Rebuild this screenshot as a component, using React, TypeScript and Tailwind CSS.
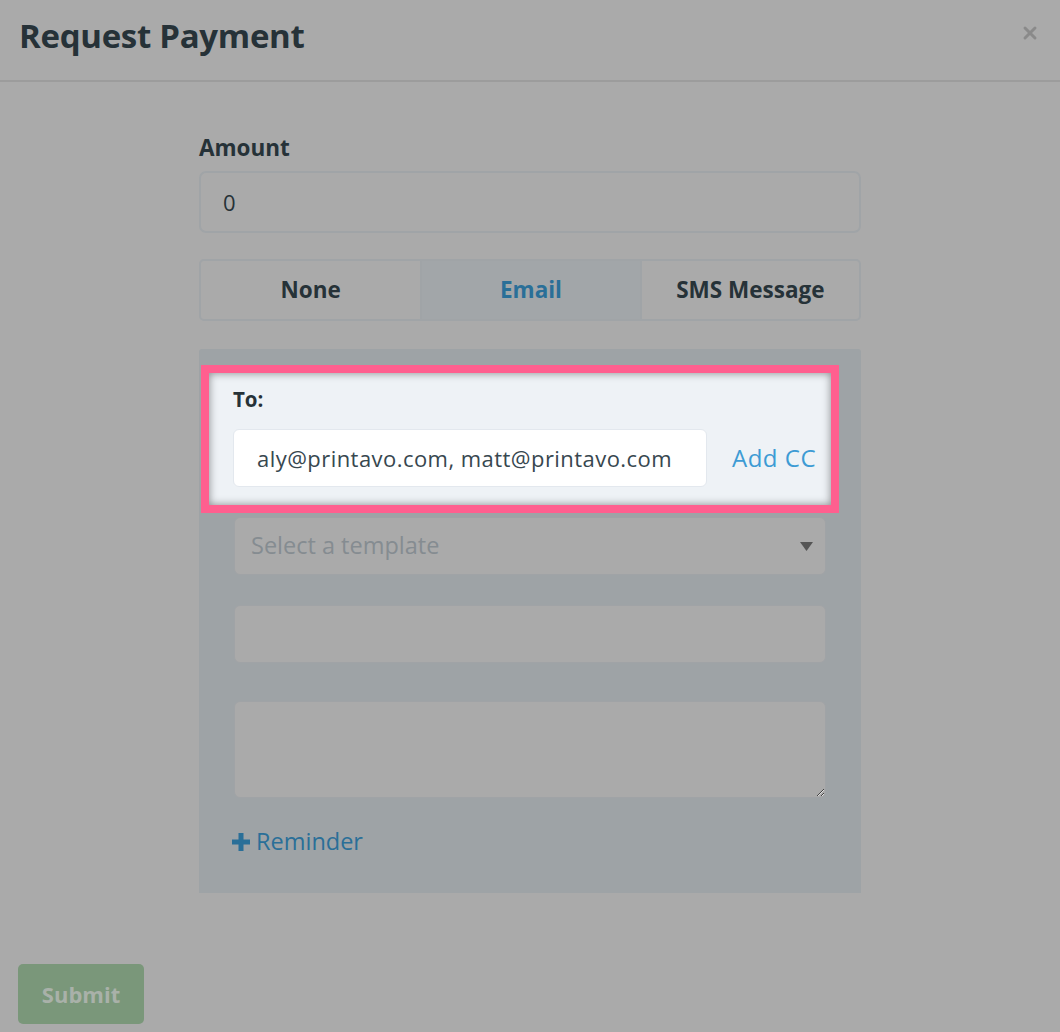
import { X } from 'lucide-react';

const METHODS = ['None', 'Email', 'SMS Message'];

export default function App() {
    const selected = 'Email';

    return (
        <div className="w-full min-h-[1032px] bg-[#aaaaaa] flex flex-col font-['Open_Sans',sans-serif] text-[#263238]">
            {/* Header */}
            <div className="h-[82px] border-b-2 border-[#9c9c9c] pl-[19px] pr-[20px] flex items-center justify-between">
                <h1 className="text-[33px] font-bold tracking-[-0.3px] -mt-[8px]">Request Payment</h1>
                <X className="w-[20px] h-[20px] text-[#8a8a8a] -mt-[14px]" strokeWidth={3.5} />
            </div>

            {/* Body */}
            <div className="w-[662px] mx-auto pt-[51px] flex flex-col">
                <label className="text-[22.5px] font-bold leading-[30px]">Amount</label>
                <div className="mt-[8px] h-[62px] rounded-[7px] border-2 border-[#a0a4a7] flex items-center px-[22px] text-[22px]">
                    0
                </div>

                {/* Delivery method */}
                <div className="mt-[26px] h-[62px] rounded-[5px] border-2 border-[#a0a4a7] grid grid-cols-3 overflow-hidden">
                    {METHODS.map((m, i) => (
                        <div
                            key={m}
                            className={
                                'flex items-center justify-center text-[22.5px] font-bold ' +
                                (i > 0 ? 'border-l-2 border-[#a0a4a7] ' : '') +
                                (m === selected ? 'bg-[#a2a6a9] text-[#2a6f98]' : 'text-[#263238]')
                            }
                        >
                            {m}
                        </div>
                    ))}
                </div>

                {/* Email panel */}
                <div className="mt-[28px] bg-[#9ea3a6] rounded-t-[3px] pt-[16px] pb-[34px] flex flex-col">
                    <div className="ml-[2px] w-[638px] border-[8px] border-[#ff5f8f] bg-[#eef2f6] shadow-[inset_0_0_8px_rgba(0,0,0,0.45)] pl-[24px] pr-[10px] pt-[12px] pb-[18px]">
                        <div className="text-[20.5px] font-bold leading-[28px]">To:</div>
                        <div className="mt-[16px] flex items-center">
                            <div className="w-[474px] h-[58px] bg-white rounded-[6px] border border-[#e3e8ee] flex items-center pl-[23px] text-[22px] tracking-[0.45px] text-[#37474f]">
                                aly@printavo.com, matt@printavo.com
                            </div>
                            <span className="ml-[25px] text-[24px] tracking-[0.5px] text-[#3d9bd4]">Add CC</span>
                        </div>
                    </div>

                    <div className="px-[35px] flex flex-col">
                        <div className="mt-[4px] h-[58px] rounded-[6px] border border-[#a0a3a6] bg-[#aaaaaa] flex items-center justify-between pl-[16px] pr-[12px]">
                            <span className="text-[23.5px] text-[#858c91]">Select a template</span>
                            <svg width="13" height="9" viewBox="0 0 13 9">
                                <path d="M0 0 H13 L6.5 9 Z" fill="#555555" />
                            </svg>
                        </div>
                        <div className="mt-[30px] h-[58px] rounded-[6px] border border-[#a0a3a6] bg-[#aaaaaa]" />
                        <textarea
                            readOnly
                            className="mt-[38px] h-[97px] rounded-[6px] border border-[#a0a3a6] bg-[#aaaaaa] outline-none resize-y"
                        />
                        <div className="mt-[26px] -ml-[2px] flex items-center gap-[6px] text-[#2a6f98]">
                            <svg width="18" height="18" viewBox="0 0 18 18">
                                <path d="M6.5 0 H11.5 V6.5 H18 V11.5 H11.5 V18 H6.5 V11.5 H0 V6.5 H6.5 Z" fill="#2a6f98" />
                            </svg>
                            <span className="text-[23.5px]">Reminder</span>
                        </div>
                    </div>
                </div>
            </div>

            {/* Footer */}
            <div className="mt-[71px] pl-[18px]">
                <button className="w-[126px] h-[60px] rounded-[5px] bg-[#7a977a] text-[22px] font-bold text-[#a9b1a9]">
                    Submit
                </button>
            </div>
        </div>
    );
}
